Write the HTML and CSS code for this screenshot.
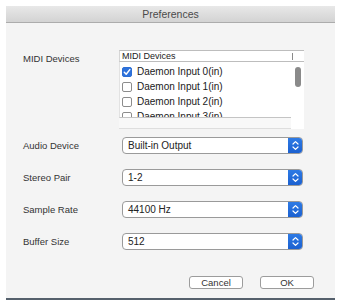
FILE: index.html
```html
<!DOCTYPE html>
<html>
<head>
	<meta charset="UTF-8">
	<title>Preferences</title>
	<link rel="stylesheet" href="styles.css">
</head>
<body>
	<div class="window">
		<div class="titlebar">Preferences</div>
		<div class="content">
			<div class="row row-midi">
				<div class="label">MIDI Devices</div>
				<div class="device-list">
					<div class="list-header">
						<span class="list-title">MIDI Devices</span>
						<span class="list-divider"></span>
					</div>
					<div class="list-main">
						<div class="list-rows">
							<div class="list-row">
								<span class="check checked">
									<svg width="10" height="10" viewBox="0 0 10 10"><path d="M2.3 5.3 L4.2 7.2 L7.8 2.6" fill="none" stroke="#fff" stroke-width="1.5" stroke-linecap="round" stroke-linejoin="round"/></svg>
								</span>
								Daemon Input 0(in)
							</div>
							<div class="list-row"><span class="check"></span>Daemon Input 1(in)</div>
							<div class="list-row"><span class="check"></span>Daemon Input 2(in)</div>
							<div class="list-row"><span class="check"></span>Daemon Input 3(in)</div>
						</div>
						<div class="scrollbar"><div class="thumb"></div></div>
					</div>
					<div class="list-footer">
						<div class="hscroll"></div>
						<div class="corner"></div>
					</div>
				</div>
			</div>

			<div class="row row-select first">
				<div class="label">Audio Device</div>
				<div class="select">
					<span class="select-value">Built-in Output</span>
					<span class="select-arrows">
						<svg width="15" height="15" viewBox="0 0 15 15"><path d="M5 6 L7.5 3.6 L10 6 M5 9 L7.5 11.4 L10 9" fill="none" stroke="#fff" stroke-width="1.2" stroke-linecap="round" stroke-linejoin="round"/></svg>
					</span>
				</div>
			</div>
			<div class="row row-select">
				<div class="label">Stereo Pair</div>
				<div class="select">
					<span class="select-value">1-2</span>
					<span class="select-arrows">
						<svg width="15" height="15" viewBox="0 0 15 15"><path d="M5 6 L7.5 3.6 L10 6 M5 9 L7.5 11.4 L10 9" fill="none" stroke="#fff" stroke-width="1.2" stroke-linecap="round" stroke-linejoin="round"/></svg>
					</span>
				</div>
			</div>
			<div class="row row-select">
				<div class="label">Sample Rate</div>
				<div class="select">
					<span class="select-value">44100 Hz</span>
					<span class="select-arrows">
						<svg width="15" height="15" viewBox="0 0 15 15"><path d="M5 6 L7.5 3.6 L10 6 M5 9 L7.5 11.4 L10 9" fill="none" stroke="#fff" stroke-width="1.2" stroke-linecap="round" stroke-linejoin="round"/></svg>
					</span>
				</div>
			</div>
			<div class="row row-select">
				<div class="label">Buffer Size</div>
				<div class="select">
					<span class="select-value">512</span>
					<span class="select-arrows">
						<svg width="15" height="15" viewBox="0 0 15 15"><path d="M5 6 L7.5 3.6 L10 6 M5 9 L7.5 11.4 L10 9" fill="none" stroke="#fff" stroke-width="1.2" stroke-linecap="round" stroke-linejoin="round"/></svg>
					</span>
				</div>
			</div>
		</div>
		<div class="buttons">
			<button class="btn">Cancel</button>
			<button class="btn">OK</button>
		</div>
	</div>
</body>
</html>
```

FILE: styles.css
```css
body {
	margin: 0;
	padding: 0;
	background: #fff;
	font-family: "Liberation Sans", Arial, sans-serif;
	color: #222;
}
.window {
	margin: 6px 0 0 6px;
	width: 329px;
	height: 294px;
	box-sizing: border-box;
	background: #f4f4f4;
	border-bottom: 2px solid #55606c;
	display: flex;
	flex-direction: column;
}
.titlebar {
	height: 16px;
	line-height: 17px;
	border-bottom: 1px solid #acacac;
	background: linear-gradient(#e8e8e8, #d3d3d3);
	text-align: center;
	font-size: 10.5px;
	color: #4a4a4a;
}
.content {
	padding: 27px 0 0 17px;
}
.row {
	display: flex;
}
.label {
	width: 99px;
	flex: none;
	font-size: 9.5px;
	color: #333;
}
.row-midi {
	align-items: flex-start;
}
.row-midi .label {
	margin-top: 3px;
}
.device-list {
	margin-left: -3px;
	width: 185px;
}
.list-header {
	height: 10px;
	border-top: 1px solid #bdbdbd;
	border-bottom: 1px solid #bdbdbd;
	border-left: 1px solid #d6d6d6;
	background: #fff;
	display: flex;
	align-items: center;
}
.list-title {
	width: 170px;
	padding-left: 2px;
	font-size: 9px;
	line-height: 10px;
	color: #222;
}
.list-divider {
	width: 1px;
	height: 7px;
	background: #8a8a8a;
}
.list-main {
	display: flex;
	height: 56px;
}
.list-rows {
	width: 172px;
	height: 55px;
	padding-top: 2px;
	box-sizing: border-box;
	height: 56px;
	overflow: hidden;
	background: #fff;
	border-left: 1px solid #e2e2e2;
	border-bottom: 1px solid #c4c4c4;
}
.list-row {
	height: 15px;
	display: flex;
	align-items: center;
	padding-left: 2px;
	font-size: 10px;
	color: #1a1a1a;
}
.check {
	width: 8px;
	height: 8px;
	margin-right: 5px;
	border: 1px solid #8c8c8c;
	border-radius: 2px;
	background: #fff;
	display: flex;
}
.check.checked {
	border-color: #2c6ed5;
	background: #2e72db;
}
.check svg {
	margin: -1px;
}
.scrollbar {
	width: 13px;
	background: #fff;
	position: relative;
}
.thumb {
	position: absolute;
	left: 4px;
	top: 5px;
	width: 6px;
	height: 20px;
	border-radius: 3px;
	background: #8a8a8a;
}
.list-footer {
	display: flex;
	height: 11px;
}
.hscroll {
	width: 172px;
	background: #f8f8f8;
	border-bottom: 1px solid #dedede;
}
.corner {
	width: 13px;
	background: #fff;
}
.row-select {
	align-items: center;
	margin-top: 15px;
}
.row-select.first {
	margin-top: 8px;
}
.row-select .label {
	width: 99px;
}
.select {
	width: 181px;
	height: 17px;
	box-sizing: border-box;
	border: 1px solid #9a9a9a;
	border-radius: 4px;
	background: #fff;
	display: flex;
	align-items: center;
	overflow: hidden;
}
.select-value {
	flex: 1;
	padding-left: 5px;
	font-size: 10px;
	color: #222;
}
.select-arrows {
	width: 15px;
	height: 17px;
	margin-right: -1px;
	background: linear-gradient(#2f7ce6, #1a5fcf);
	display: flex;
	align-items: center;
	justify-content: center;
}
.buttons {
	display: flex;
	justify-content: flex-end;
	gap: 17px;
	padding-right: 21px;
	margin-top: 26px;
}
.btn {
	width: 54px;
	height: 13px;
	padding: 0;
	border: 1px solid #9c9c9c;
	border-radius: 3px;
	background: #fff;
	font-family: "Liberation Sans", Arial, sans-serif;
	font-size: 9.5px;
	line-height: 11px;
	color: #333;
}
```
